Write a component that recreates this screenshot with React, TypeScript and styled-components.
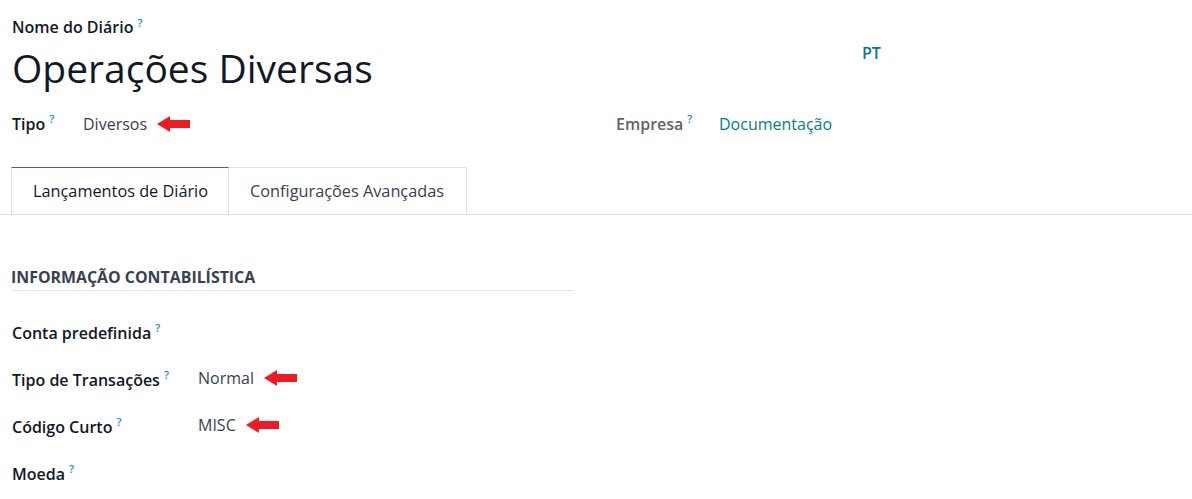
import React from 'react';
import styled, { createGlobalStyle } from 'styled-components';

const GlobalStyle = createGlobalStyle`
  body {
    margin: 0;
    background: #ffffff;
    font-family: "Open Sans", "Noto Sans", sans-serif;
    color: #1f2937;
  }
`;

const Arrow = () => (
  <svg width="33" height="16" viewBox="0 0 33 16">
    <path d="M0 8 L13 0 L13 4 L33 4 L33 12 L13 12 L13 16 Z" fill="#ed1c24" />
  </svg>
);

const Page = styled.div`
  width: 1192px;
  height: 499px;
  overflow: hidden;
`;

const Head = styled.div`
  padding: 15px 0 0 12px;
`;

const FieldLabel = styled.div`
  font-size: 16px;
  font-weight: 600;
  color: #111827;
  height: 24px;
  display: flex;
  align-items: center;
`;

const Help = styled.sup`
  font-size: 11px;
  font-weight: 600;
  color: #1590b3;
  margin-left: 4px;
  position: relative;
  top: -5px;
`;

const TitleRow = styled.div`
  display: grid;
  grid-template-columns: 850px 1fr;
  align-items: start;
  height: 60px;
`;

const Title = styled.h1`
  margin: 0;
  font-size: 39px;
  font-weight: 400;
  line-height: 58px;
  color: #111827;
`;

const Lang = styled.span`
  font-size: 16px;
  font-weight: 600;
  color: #017e84;
  line-height: 24px;
  padding-top: 2px;
`;

const FieldsGrid = styled.div`
  display: grid;
  grid-template-columns: 604px 1fr;
  margin-top: 12px;
`;

const Field = styled.div<{ $labelWidth: number }>`
  display: grid;
  grid-template-columns: ${(p) => p.$labelWidth}px auto;
  align-items: center;
  height: 26px;
`;

const Label = styled.div<{ $muted?: boolean }>`
  font-size: 16px;
  font-weight: 600;
  line-height: 22px;
  color: ${(p) => (p.$muted ? '#5f636b' : '#111827')};
  display: flex;
  align-items: flex-start;
  align-self: start;
  padding-top: 2px;
`;

const Value = styled.div<{ $link?: boolean }>`
  font-size: 16px;
  line-height: 22px;
  color: ${(p) => (p.$link ? '#017e84' : '#374151')};
  display: flex;
  align-items: center;
  gap: 10px;
`;

const Tabs = styled.div`
  display: flex;
  margin-top: 30px;
  padding-left: 11px;
  border-bottom: 1px solid #dee2e6;
`;

const Tab = styled.div<{ $active?: boolean }>`
  height: 46px;
  padding: 0 ${(p) => (p.$active ? '20px' : '22px')} 0 21px;
  display: flex;
  align-items: center;
  font-size: 16.3px;
  color: ${(p) => (p.$active ? '#111827' : '#374151')};
  border: 1px solid #dee2e6;
  border-top-color: ${(p) => (p.$active ? '#71506b' : '#dee2e6')};
  border-bottom: none;
  margin-bottom: ${(p) => (p.$active ? '-1px' : '0')};
  background: #ffffff;
  & + & {
    border-left: none;
  }
`;

const Sheet = styled.div`
  padding: 52px 0 0 11px;
  width: 563px;
`;

const SectionTitle = styled.div`
  font-size: 15.9px;
  font-weight: 700;
  line-height: 21px;
  color: #374151;
  padding-bottom: 2px;
  border-bottom: 1px solid #e5e7eb;
`;

const Rows = styled.div`
  display: flex;
  flex-direction: column;
  padding-top: 29px;
  padding-left: 1px;
`;

const Row = styled.div`
  display: grid;
  grid-template-columns: 186px auto;
  height: 47px;
  align-items: start;
`;

const App = () => {
  return (
    <Page>
      <GlobalStyle />
      <Head>
        <FieldLabel>
          Nome do Diário<Help>?</Help>
        </FieldLabel>
        <TitleRow>
          <Title>Operações Diversas</Title>
          <Lang>PT</Lang>
        </TitleRow>
        <FieldsGrid>
          <Field $labelWidth={71}>
            <Label>
              Tipo<Help>?</Help>
            </Label>
            <Value>
              Diversos <Arrow />
            </Value>
          </Field>
          <Field $labelWidth={103}>
            <Label $muted>
              Empresa<Help>?</Help>
            </Label>
            <Value $link>Documentação</Value>
          </Field>
        </FieldsGrid>
      </Head>
      <Tabs>
        <Tab $active>Lançamentos de Diário</Tab>
        <Tab>Configurações Avançadas</Tab>
      </Tabs>
      <Sheet>
        <SectionTitle>INFORMAÇÃO CONTABILÍSTICA</SectionTitle>
        <Rows>
          <Row>
            <Label>
              Conta predefinida<Help>?</Help>
            </Label>
            <Value />
          </Row>
          <Row>
            <Label>
              Tipo de Transações<Help>?</Help>
            </Label>
            <Value>
              Normal <Arrow />
            </Value>
          </Row>
          <Row>
            <Label>
              Código Curto<Help>?</Help>
            </Label>
            <Value>
              MISC <Arrow />
            </Value>
          </Row>
          <Row>
            <Label>
              Moeda<Help>?</Help>
            </Label>
            <Value />
          </Row>
        </Rows>
      </Sheet>
    </Page>
  );
};

export default App;
